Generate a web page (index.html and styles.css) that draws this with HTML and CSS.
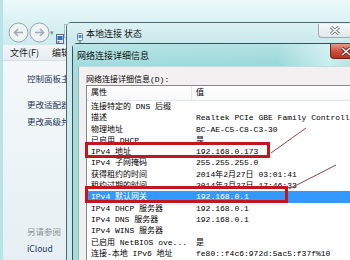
FILE: index.html
```html
<!DOCTYPE html>
<html lang="zh-CN">
<head>
    <meta charset="UTF-8">
    <meta name="viewport" content="width=device-width, initial-scale=1.0">
    <title>网络连接详细信息</title>
    <link rel="stylesheet" href="styles.css">
</head>
<body>
    <div class="desktop">
        <div class="explorer">
            <div class="explorer-top">
                <span class="nav-btn">
                    <svg width="21" height="21" viewBox="0 0 21 21"><circle cx="10.5" cy="10.5" r="9.5" fill="#eef3f4" stroke="#9aa7ab"/><path d="M15 10.5H7M10 7l-3.5 3.5L10 14" fill="none" stroke="#a3adb0" stroke-width="1.6"/></svg>
                </span>
                <span class="nav-btn">
                    <svg width="21" height="21" viewBox="0 0 21 21"><circle cx="10.5" cy="10.5" r="9.5" fill="#eef3f4" stroke="#9aa7ab"/><path d="M6 10.5h8M11 7l3.5 3.5L11 14" fill="none" stroke="#a3adb0" stroke-width="1.6"/></svg>
                </span>
                <span class="nav-drop">▾</span>
                <span class="cp-icon">
                    <svg width="8" height="12" viewBox="0 0 8 12"><rect x="0.5" y="1.5" width="7" height="9" fill="#dfe8f2" stroke="#5a6e8c"/><rect x="1.5" y="3" width="5" height="4" fill="#2f6fc4"/><rect x="1.5" y="8" width="2" height="2" fill="#7b8aa0"/></svg>
                </span>
                <div class="address-bar"><span class="addr-tools">· ▾ ↻</span></div>
            </div>
            <div class="menubar">
                <span>文件(F)</span>
                <span>编辑(E)</span>
            </div>
            <div class="nav-pane">
                <div class="pane-link">控制面板主页</div>
                <div class="pane-group">
                    <div class="pane-link">更改适配器设置</div>
                    <div class="pane-link">更改高级共享设置</div>
                </div>
                <div class="pane-foot">
                    <div class="pane-title">另请参阅</div>
                    <div class="pane-link">iCloud</div>
                </div>
            </div>
        </div>

        <div class="window status-win">
            <div class="titlebar glass">
                <span class="win-icon">
                    <svg width="8" height="13" viewBox="0 0 8 13"><rect x="1.5" y="0.5" width="5" height="7" rx="1" fill="#e8eef2" stroke="#6c7f8a"/><rect x="2.5" y="2" width="3" height="3" fill="#4b8fd6"/><path d="M4 7.5v5" stroke="#6c7f8a" stroke-width="1.2"/></svg>
                </span>
                <span class="title">本地连接 状态</span>
                <span class="close inactive">
                    <svg width="12" height="9" viewBox="0 0 12 9"><path d="M2 1l8 7M10 1L2 8" stroke="#6f7b80" stroke-width="3"/><path d="M2 1l8 7M10 1L2 8" stroke="#fff" stroke-width="1.5"/></svg>
                </span>
            </div>
            <div class="status-body"></div>
        </div>

        <div class="window details-win">
            <div class="titlebar active">
                <span class="title">网络连接详细信息</span>
                <span class="close red">
                    <svg width="12" height="9" viewBox="0 0 12 9"><path d="M2 1l8 7M10 1L2 8" stroke="#5b1a12" stroke-width="3"/><path d="M2 1l8 7M10 1L2 8" stroke="#fff" stroke-width="1.5"/></svg>
                </span>
            </div>
            <div class="dlg-frame">
                <div class="dlg-body">
                    <div class="dlg-label">网络连接详细信息(D):</div>
                    <div class="listview">
                        <div class="lv-head"><span class="c1">属性</span><span class="c2">值</span></div>
                        <div class="lv-row"><span class="c1">连接特定的 DNS 后缀</span><span class="c2"></span></div>
                        <div class="lv-row"><span class="c1">描述</span><span class="c2">Realtek PCIe GBE Family Controller</span></div>
                        <div class="lv-row"><span class="c1">物理地址</span><span class="c2">BC-AE-C5-C8-C3-30</span></div>
                        <div class="lv-row"><span class="c1">已启用 DHCP</span><span class="c2">是</span></div>
                        <div class="lv-row"><span class="c1">IPv4 地址</span><span class="c2">192.168.0.173</span></div>
                        <div class="lv-row"><span class="c1">IPv4 子网掩码</span><span class="c2">255.255.255.0</span></div>
                        <div class="lv-row"><span class="c1">获得租约的时间</span><span class="c2">2014年2月27日 03:01:41</span></div>
                        <div class="lv-row"><span class="c1">租约过期的时间</span><span class="c2">2014年2月27日 17:46:33</span></div>
                        <div class="lv-row selected"><span class="c1">IPv4 默认网关</span><span class="c2">192.168.0.1</span></div>
                        <div class="lv-row"><span class="c1">IPv4 DHCP 服务器</span><span class="c2">192.168.0.1</span></div>
                        <div class="lv-row"><span class="c1">IPv4 DNS 服务器</span><span class="c2">192.168.0.1</span></div>
                        <div class="lv-row"><span class="c1">IPv4 WINS 服务器</span><span class="c2"></span></div>
                        <div class="lv-row"><span class="c1">已启用 NetBIOS ove...</span><span class="c2">是</span></div>
                        <div class="lv-row"><span class="c1">连接-本地 IPv6 地址</span><span class="c2">fe80::f4c6:972d:5ac5:f37f%10</span></div>
                        <div class="lv-row"><span class="c1">IPv6 默认网关</span><span class="c2"></span></div>
                    </div>
                </div>
            </div>
        </div>

        <!-- annotation marks drawn over the screenshot -->
        <svg class="marks" width="350" height="260" viewBox="0 0 350 260">
            <rect x="86.5" y="143.5" width="182" height="13" fill="none" stroke="#c3161d" stroke-width="3"/>
            <rect x="86.5" y="187.5" width="200" height="14" fill="none" stroke="#c3161d" stroke-width="3"/>
            <path d="M271 153L306 128" stroke="#8a4646" stroke-width="1"/>
            <path d="M289 189L336 165" stroke="#8a4646" stroke-width="1"/>
        </svg>
    </div>
</body>
</html>
```

FILE: styles.css
```css
body {
    margin: 0;
    font-family: "Noto Sans CJK SC", sans-serif;
    color: #000;
}

.desktop {
    position: relative;
    width: 350px;
    height: 260px;
    overflow: hidden;
    background: #dff2f4;
}

/* explorer window in the back */

.explorer {
    display: flex;
    flex-direction: column;
    height: 100%;
    border-left: 3px solid #b9e3e6;
}

.explorer-top {
    height: 45px;
    box-sizing: border-box;
    padding: 22px 0 0 5px;
    display: flex;
    align-items: flex-start;
    background: linear-gradient(#ecf9fa, #d6f0f2 60%, #cdebee);
}

.nav-btn {
    display: block;
    width: 21px;
    height: 21px;
}

.nav-drop {
    width: 6px;
    font-size: 7px;
    line-height: 21px;
    color: #7f8b90;
}

.cp-icon {
    display: block;
    width: 8px;
    padding-top: 4px;
}

.address-bar {
    width: 254px;
    height: 14px;
    margin-top: 2px;
    box-sizing: border-box;
    background: rgba(255, 255, 255, 0.85);
    border: 1px solid #a9bcc2;
    display: flex;
    justify-content: flex-end;
}

.addr-tools {
    font-size: 8px;
    line-height: 12px;
    color: #b4c0c4;
    padding-right: 10px;
}

.menubar {
    height: 15px;
    display: flex;
    gap: 13px;
    padding-left: 7px;
    font-size: 9px;
    line-height: 15px;
    background: linear-gradient(#f2f5f8, #e7edf3);
    border-bottom: 1px solid #d5dde5;
    color: #1b1b1b;
}

.nav-pane {
    flex: 1;
    display: flex;
    flex-direction: column;
    padding: 10px 0 5px 24px;
    background: linear-gradient(#f4f8fa, #e6eff3);
}

.pane-link {
    font-size: 8.5px;
    line-height: 14px;
    color: #1e395b;
    white-space: nowrap;
}

.pane-group {
    margin-top: 12px;
    display: flex;
    flex-direction: column;
    gap: 3px;
}

.pane-foot {
    margin-top: auto;
    display: flex;
    flex-direction: column;
    gap: 3px;
}

.pane-title {
    font-size: 8.5px;
    line-height: 14px;
    color: #8a9396;
}

/* dialog windows on top */

.window {
    position: absolute;
    box-sizing: border-box;
    border: 1px solid #4d6a74;
    border-radius: 5px 5px 0 0;
}

.status-win {
    left: 66px;
    top: 22px;
    width: 290px;
    height: 260px;
    background: #cfe9ec;
}

.details-win {
    left: 72px;
    top: 43px;
    width: 293px;
    height: 230px;
    border-color: #35515b;
    background: #a9dcdd;
}

.titlebar {
    display: flex;
    align-items: center;
    padding-right: 3px;
}

.titlebar .title {
    font-size: 9px;
    color: #111;
    white-space: nowrap;
}

.titlebar .close {
    margin-left: auto;
    display: flex;
    align-items: center;
    justify-content: center;
    width: 34px;
    height: 14px;
    box-sizing: border-box;
    border-radius: 0 0 4px 4px;
    align-self: flex-start;
}

.titlebar.glass {
    height: 20px;
    padding-left: 9px;
    background: linear-gradient(rgba(232, 248, 249, 0.55), rgba(196, 233, 236, 0.55));
}

.win-icon {
    display: block;
    width: 8px;
    height: 13px;
    margin-right: 2px;
}

.close.inactive {
    margin-top: 1px;
    background: linear-gradient(#f6fafb, #dfe8eb);
    border: 1px solid #98aab0;
    border-top: none;
}

.status-body {
    height: 100%;
}

.titlebar.active {
    height: 22px;
    padding-left: 4px;
    background:
        linear-gradient(rgba(255, 255, 255, 0.25), rgba(255, 255, 255, 0)),
        linear-gradient(to right, #a3dcdd, #9ad8d9 70%, #c9eded 88%, #aadfe0);
}

.close.red {
    width: 31px;
    height: 15px;
    background: linear-gradient(#e89a8a, #d0503f 50%, #b8321f);
    border: 1px solid #6e2218;
    border-top: none;
}

.dlg-frame {
    padding: 0 0 0 5px;
    height: 100%;
}

.dlg-body {
    height: 100%;
    box-sizing: border-box;
    padding: 7px 0 0 7px;
    background: #f2f0f1;
    border-left: 1px solid #8fb3b8;
    border-top: 1px solid #c7dadc;
}

.dlg-label,
.listview {
    font-family: "Liberation Mono", "Noto Sans CJK SC", monospace;
    font-size: 8px;
}

.dlg-label {
    line-height: 11px;
    white-space: nowrap;
}

.listview {
    background: #fff;
    border: 1px solid #828790;
    border-right: none;
    height: 100%;
}

.lv-head,
.lv-row {
    display: flex;
    white-space: nowrap;
}

.lv-head {
    height: 14px;
    line-height: 14px;
    border-bottom: 1px solid #e3e6ea;
    background: linear-gradient(#fff, #f7f8f9);
}

.lv-head .c1 {
    border-right: 1px solid #e3e6ea;
}

.lv-row {
    height: 11.3px;
    line-height: 11.3px;
}

.c1 {
    flex: none;
    width: 105px;
    box-sizing: border-box;
    padding-left: 4px;
    overflow: hidden;
}

.c2 {
    padding-left: 4px;
}

.lv-row.selected {
    background: #3399ff;
    color: #fff;
}

.marks {
    position: absolute;
    left: 0;
    top: 0;
    pointer-events: none;
}
```
